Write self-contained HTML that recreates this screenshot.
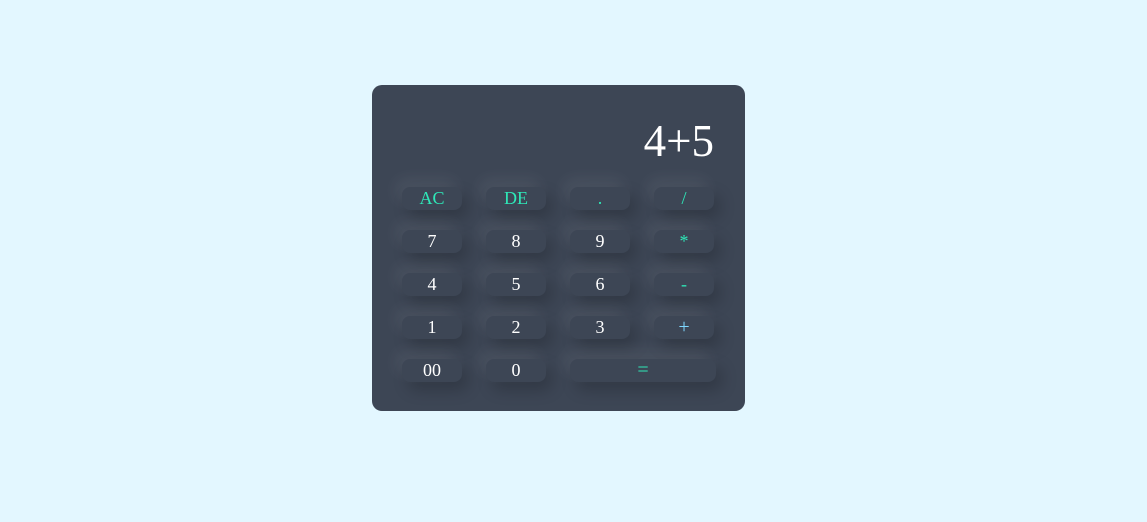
<!DOCTYPE html>
<html><head><style>
html,body{margin:0;padding:0;width:1147px;height:522px;background:#e3f7ff;overflow:hidden}
.card{position:absolute;left:372px;top:85px;width:373px;height:326px;background:#3d4655;border-radius:10px}
.disp{position:absolute;right:31px;top:30px;font-family:"Liberation Serif",serif;font-size:45px;color:#fff;line-height:52px}
.b{position:absolute;width:60px;height:23px;border-radius:8px;background:#3d4655;box-shadow:-6px -8px 16px rgba(255,255,255,0.07),6px 8px 16px rgba(0,0,0,0.2);font-family:"Liberation Serif",serif;font-size:18px;color:#fff;text-align:center;line-height:23px}
.g{color:#2ee8b8}
</style></head><body>
<div class="card">
<div class="disp">4+5</div>
<div class="b g" style="left:30px;top:102px">AC</div>
<div class="b g" style="left:114px;top:102px">DE</div>
<div class="b g" style="left:198px;top:102px">.</div>
<div class="b g" style="left:282px;top:102px">/</div>
<div class="b" style="left:30px;top:145px">7</div>
<div class="b" style="left:114px;top:145px">8</div>
<div class="b" style="left:198px;top:145px">9</div>
<div class="b g" style="left:282px;top:145px">*</div>
<div class="b" style="left:30px;top:188px">4</div>
<div class="b" style="left:114px;top:188px">5</div>
<div class="b" style="left:198px;top:188px">6</div>
<div class="b g" style="left:282px;top:188px">-</div>
<div class="b" style="left:30px;top:231px">1</div>
<div class="b" style="left:114px;top:231px">2</div>
<div class="b" style="left:198px;top:231px">3</div>
<div class="b" style="left:282px;top:231px;color:#7fd8ff;font-size:20px">+</div>
<div class="b" style="left:30px;top:274px">00</div>
<div class="b" style="left:114px;top:274px">0</div>
<div class="b g" style="left:198px;top:274px;width:146px;font-size:20px">=</div>
</div>
</body></html>
